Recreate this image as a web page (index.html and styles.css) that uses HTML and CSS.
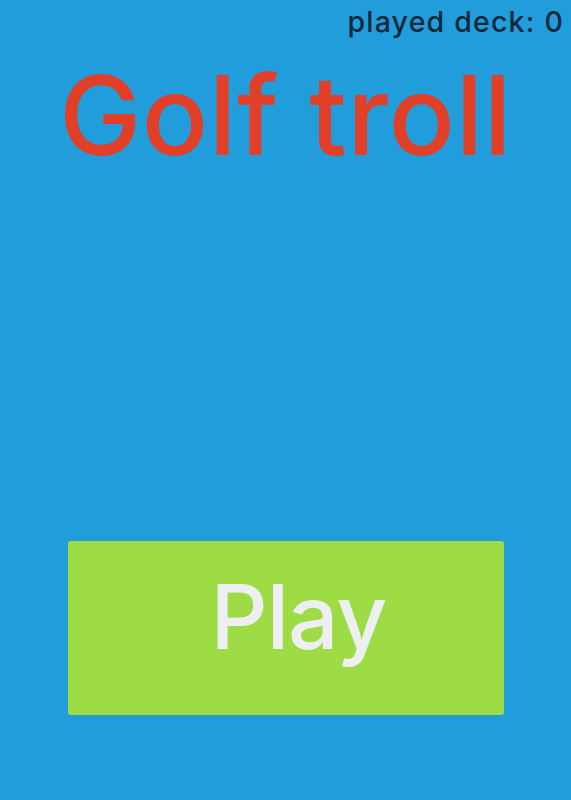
FILE: index.html
```html
<!DOCTYPE html>
<html lang="en">
<head>
  <meta charset="UTF-8" />
  <meta name="viewport" content="width=device-width, initial-scale=1.0" />
  <title>Golf troll</title>
  <link rel="stylesheet" href="styles.css">
</head>
<body>
  <div class="screen">
    <div class="deck-count">played deck: <span id="deck">0</span></div>
    <h1 class="title">Golf troll</h1>
    <div class="spacer"></div>
    <button class="play-btn">Play</button>
  </div>
</body>
</html>
```

FILE: styles.css
```css
body {
  margin: 0;
  padding: 0;
  background: #229ddb;
  font-family: Inter, "Open Sans", sans-serif;
}
.screen {
  height: 800px;
  display: flex;
  flex-direction: column;
  align-items: center;
}
.deck-count {
  align-self: flex-end;
  margin-right: 7px;
  margin-top: 4px;
  font-size: 28.5px;
  font-weight: 500;
  line-height: 36px;
  letter-spacing: 1.2px;
  color: #10283a;
}
.title {
  margin: 15px 0 0;
  font-size: 110px;
  font-weight: 500;
  line-height: 120px;
  color: #e23f29;
  letter-spacing: 0.6px;
}
.spacer {
  flex: 1;
}
.play-btn {
  width: 436px;
  height: 174px;
  margin-bottom: 85px;
  padding: 0 0 24px 26px;
  background: #9edc45;
  border: none;
  border-radius: 3px;
  color: #eeeff1;
  font-family: inherit;
  font-size: 89px;
  font-weight: 500;
  letter-spacing: -1px;
  cursor: pointer;
}
```
